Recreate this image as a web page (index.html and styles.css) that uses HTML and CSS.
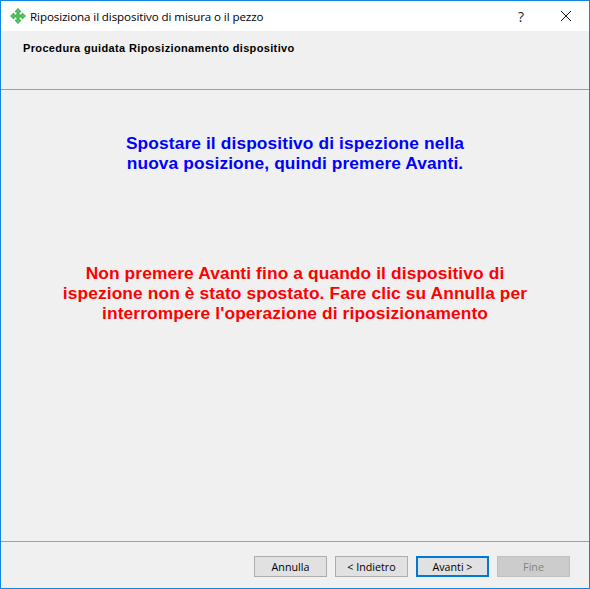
FILE: index.html
```html
<!DOCTYPE html>
<html lang="it">
<head>
<meta charset="utf-8">
<title>Riposiziona il dispositivo di misura o il pezzo</title>
<link rel="stylesheet" href="styles.css">
</head>
<body>
<div class="window">
  <header class="titlebar">
    <svg class="app-icon" width="16" height="16" viewBox="0 0 16 16">
      <path d="M8 .5 L11 3.8 L9 3.8 L9 7 L12.2 7 L12.2 5 L15.5 8 L12.2 11 L12.2 9 L9 9 L9 12.2 L11 12.2 L8 15.5 L5 12.2 L7 12.2 L7 9 L3.8 9 L3.8 11 L.5 8 L3.8 5 L3.8 7 L7 7 L7 3.8 L5 3.8 Z" fill="#58d058" stroke="#1c9a3a" stroke-width="0.8"/>
    </svg>
    <span class="title">Riposiziona il dispositivo di misura o il pezzo</span>
    <span class="help">?</span>
    <svg class="close" width="10" height="10" viewBox="0 0 10 10">
      <path d="M0 0 L10 10 M10 0 L0 10" stroke="#111" stroke-width="1" fill="none"/>
    </svg>
  </header>
  <section class="heading">
    <h1>Procedura guidata Riposizionamento dispositivo</h1>
  </section>
  <main class="content">
    <p class="msg-blue">Spostare il dispositivo di ispezione nella<br>nuova posizione, quindi premere Avanti.</p>
    <p class="msg-red">Non premere Avanti fino a quando il dispositivo di<br>ispezione non è stato spostato. Fare clic su Annulla per<br>interrompere l'operazione di riposizionamento</p>
  </main>
  <footer class="footer">
    <button class="btn">Annulla</button>
    <button class="btn">&lt; Indietro</button>
    <button class="btn btn-default">Avanti &gt;</button>
    <button class="btn" disabled>Fine</button>
  </footer>
</div>
</body>
</html>
```
FILE: styles.css
```css
* { box-sizing: border-box; }
html, body { margin: 0; padding: 0; }
body { width: 590px; height: 589px; overflow: hidden; background: #f0f0f0; }
.window {
  width: 590px;
  height: 589px;
  border: 1px solid #0e86e6;
  display: flex;
  flex-direction: column;
  background: #f0f0f0;
}
.titlebar {
  height: 30px;
  flex: none;
  background: #fff;
  display: flex;
  align-items: center;
  padding-left: 9px;
  font-family: "Open Sans", sans-serif;
  font-size: 11.6px;
  color: #000;
}
.app-icon { flex: none; margin-right: 4px; }
.title { flex: 1; white-space: nowrap; letter-spacing: -0.1px; }
.help { font-size: 14px; width: 10px; margin-right: 35px; text-align: center; color: #222; }
.close { flex: none; margin-right: 18px; }
.heading {
  height: 59px;
  flex: none;
  border-bottom: 1px solid #a0a0a0;
  padding: 10px 0 0 22px;
}
.heading h1 {
  margin: 0;
  font-family: "Liberation Sans", sans-serif;
  font-size: 11px;
  line-height: 14px;
  font-weight: 700;
  letter-spacing: 0.35px;
  color: #000;
}
.content {
  flex: 1;
  text-align: center;
  font-family: "Liberation Sans", sans-serif;
  font-size: 17.33px;
  font-weight: 700;
  line-height: 20px;
  letter-spacing: 0.12px;
}
.content p { margin: 0; }
.msg-blue { color: #0000ff; padding-top: 43px; }
.msg-red { color: #ff0000; padding-top: 90px; }
.footer {
  height: 47px;
  flex: none;
  border-top: 1px solid #a0a0a0;
  display: flex;
  justify-content: flex-end;
  gap: 8px;
  padding: 14px 19px 0 0;
}
.btn {
  width: 73px;
  height: 21px;
  padding: 0;
  background: #e1e1e1;
  border: 1px solid #adadad;
  font-family: "Open Sans", sans-serif;
  font-size: 10.7px;
  color: #000;
}
.btn-default { border: 2px solid #0078d7; }
.btn:disabled { background: #cccccc; border-color: #bfbfbf; color: #838383; }
```
